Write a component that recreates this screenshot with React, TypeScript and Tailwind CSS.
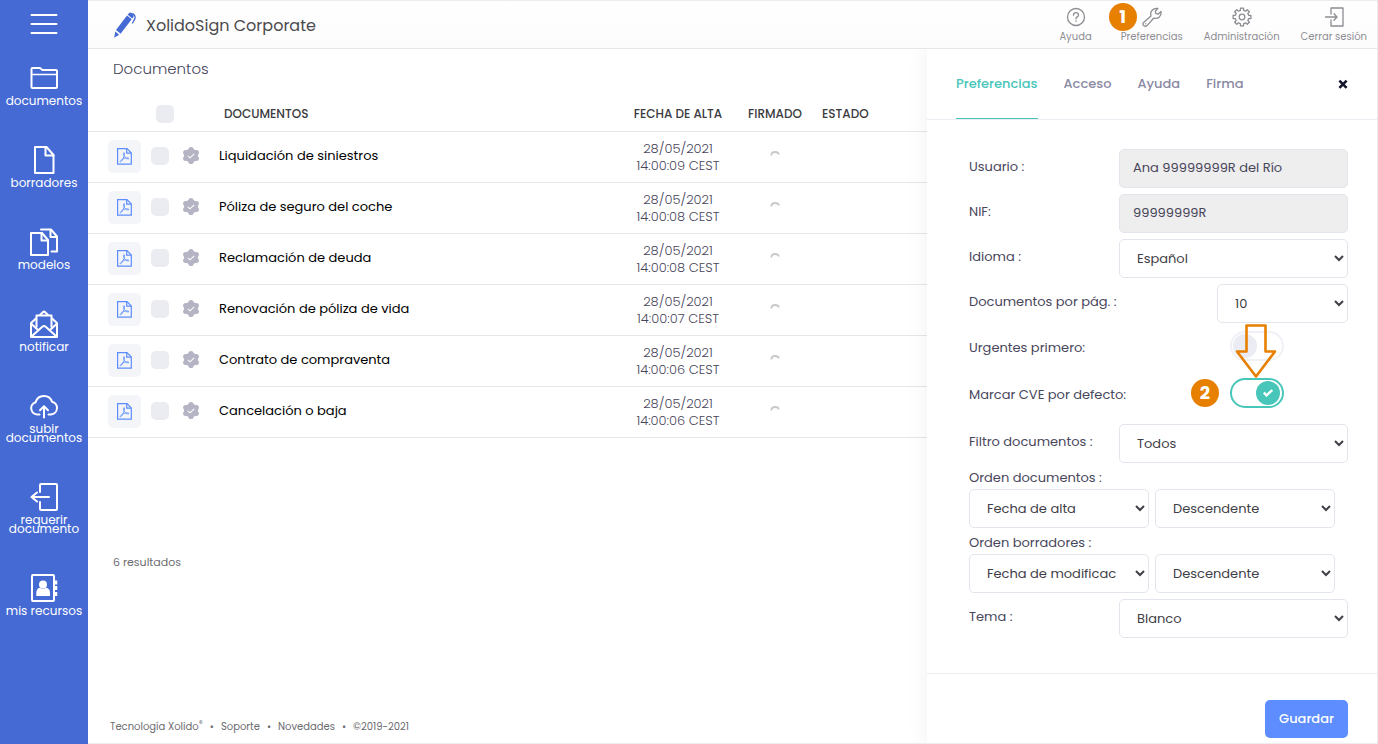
import { useState } from "react";
import type { ReactNode } from "react";

const documents = [
  { name: "Liquidación de siniestros", date: "28/05/2021", time: "14:00:09 CEST" },
  { name: "Póliza de seguro del coche", date: "28/05/2021", time: "14:00:08 CEST" },
  { name: "Reclamación de deuda", date: "28/05/2021", time: "14:00:08 CEST" },
  { name: "Renovación de póliza de vida", date: "28/05/2021", time: "14:00:07 CEST" },
  { name: "Contrato de compraventa", date: "28/05/2021", time: "14:00:06 CEST" },
  { name: "Cancelación o baja", date: "28/05/2021", time: "14:00:06 CEST" },
];

function SideIcon({ children }: { children: ReactNode }) {
  return (
    <svg
      viewBox="0 0 28 28"
      className="size-7"
      fill="none"
      stroke="currentColor"
      strokeWidth="2"
      strokeLinejoin="round"
      strokeLinecap="round"
      aria-hidden="true"
    >
      {children}
    </svg>
  );
}

const navItems = [
  {
    label: "documentos",
    icon: (
      <SideIcon>
        <path d="M1.500 23V5q0-1 1-1H10l2.500 2H26q1 0 1 1v16q0 1-1 1H2.500q-1 0-1-1" />
        <path d="M2 10.500h25" strokeWidth="1.300" />
      </SideIcon>
    ),
  },
  {
    label: "borradores",
    icon: (
      <SideIcon>
        <path d="M5 1h11.500l7 8v18H5z" />
        <path d="M15.500 1.500V9.500h8" />
      </SideIcon>
    ),
  },
  {
    label: "modelos",
    icon: (
      <SideIcon>
        <path d="M1 5h11l6 7v15H1z" />
        <path d="M11.500 5.500V12.500H18" />
        <path d="M11 1.500h10l6 7v15h-5.500M20.500 2v7H27" />
      </SideIcon>
    ),
  },
  {
    label: "notificar",
    icon: (
      <SideIcon>
        <path d="M6.500 17V5.500h15V17" />
        <path d="M10 5l2.800-2.800q1.200-1.200 2.400 0L18 5" />
        <path d="M6 8.500L1 13v14h26V13l-5-4.500" />
        <path d="M1.500 26.500l10.800-9.800q1.700-1.500 3.400 0l10.800 9.800" />
        <path d="M1.500 14L8 20M26.500 14L20 20" />
      </SideIcon>
    ),
  },
  {
    label: "subir documentos",
    icon: (
      <SideIcon>
        <path d="M9.500 22.500H7.500A6.300 6.300 0 0 1 5.600 10.200A8.600 8.600 0 0 1 22 9.700A6.500 6.500 0 0 1 21 22.500H18.500" />
        <path d="M14 25.500V14.500M10 18.200l4-4 4 4" />
      </SideIcon>
    ),
  },
  {
    label: "requerir documento",
    icon: (
      <SideIcon>
        <path d="M10 9V2q0-1 1-1h15q1 0 1 1v24q0 1-1 1H11q-1 0-1-1v-7" />
        <path d="M19 14H1.500M7 9.500L1.500 14l5.500 4.500" />
      </SideIcon>
    ),
  },
  {
    label: "mis recursos",
    icon: (
      <SideIcon>
        <rect x="2" y="1" width="22" height="26" rx="1" />
        <path d="M26 6.500v4M26 12v4M26 18v4" strokeWidth="2.500" strokeLinecap="butt" />
        <circle cx="13" cy="10.500" r="4" fill="currentColor" stroke="none" />
        <path
          d="M6.300 22v-3q0-4.500 3.600-5.200q3.100 2 6.200 0q3.900.7 3.900 5.200v3z"
          fill="currentColor"
          stroke="none"
        />
      </SideIcon>
    ),
  },
];

function PenLogo() {
  return (
    <svg viewBox="0 0 22 26" className="h-[26px] w-[22px] fill-[#456ad4]" aria-hidden="true">
      <path d="M.2 25.800L1.200 19.500L5.200 22.800z" />
      <path d="M2 18L13 3.500L17.700 7.300L6.600 21.800z" />
      <path d="M13.700 2.700L14.900 1.200Q16.300-.1 18 1.200L19 2Q20.400 3.500 19 5.500L18.200 6.500z" />
      <path
        d="M18.600 1.200Q22 3.600 20.800 6.900L18.300 11.500"
        fill="none"
        stroke="#456ad4"
        strokeWidth="1.300"
      />
    </svg>
  );
}

// Eight square teeth, four corner points per tooth.
const gearPath =
  Array.from({ length: 8 }, (_, i) => {
    const corners = [
      [-14, 6.8],
      [-9.5, 9],
      [9.5, 9],
      [14, 6.8],
    ];
    return corners
      .map(([offset, radius], j) => {
        const angle = ((i * 45 + offset) * Math.PI) / 180;
        const x = (10 + radius * Math.sin(angle)).toFixed(2);
        const y = (10 - radius * Math.cos(angle)).toFixed(2);
        return `${i === 0 && j === 0 ? "M" : "L"}${x} ${y}`;
      })
      .join("");
  }).join("") + "z";

function TopIcon({ children }: { children: ReactNode }) {
  return (
    <svg
      viewBox="0 0 20 20"
      className="size-5"
      fill="none"
      stroke="currentColor"
      strokeWidth="1.300"
      strokeLinejoin="round"
      strokeLinecap="round"
      aria-hidden="true"
    >
      {children}
    </svg>
  );
}

function PdfIcon() {
  return (
    <svg viewBox="0 0 15 17" className="h-[17px] w-[15px]" fill="none" stroke="currentColor" strokeWidth="1.200" aria-hidden="true">
      <path d="M.6.6H10L14.300 5V16.200H.6z" />
      <path d="M9.700.8V5.200H14.200" />
      <path
        d="M6.900 4.500Q5.900 5.200 6.800 7.500Q7.800 9.800 9.600 10.700Q11.600 11.300 12 10.500Q11.700 9.500 8.800 9.900Q5.600 10.500 4 12.300Q2.600 13.800 3.300 14Q4.500 13.800 5.900 11Q7.400 8 7.500 6Q7.500 4.500 6.900 4.500z"
        strokeWidth=".8"
      />
    </svg>
  );
}

function Seal() {
  return (
    <svg viewBox="0 0 16 17" className="h-[17px] w-4 fill-[#b5b4c4]" role="img" aria-label="Sellado">
      <path d="M8 .8L14.900 4.600V12.400L8 16.200L1.100 12.400V4.600z" />
      <circle cx="8" cy="2.600" r="2.600" />
      <circle cx="8" cy="14.400" r="2.600" />
      <circle cx="2.600" cy="5.400" r="2.500" />
      <circle cx="13.400" cy="5.400" r="2.500" />
      <circle cx="2.600" cy="11.600" r="2.500" />
      <circle cx="13.400" cy="11.600" r="2.500" />
      <path d="M4.800 8.800l2.200 2 4.200-4" fill="none" stroke="#fff" strokeWidth="1.100" />
    </svg>
  );
}

function Box({ label }: { label: string }) {
  return (
    <input
      type="checkbox"
      aria-label={label}
      className="block size-[18px] appearance-none rounded-[5px] bg-[#ebecf1] checked:bg-[#5d8dfe]"
    />
  );
}

function Badge({ children }: { children: ReactNode }) {
  return (
    <span className="flex size-7 items-center justify-center rounded-full bg-[#e77f00] text-lg font-bold text-white">
      {children}
    </span>
  );
}

function Toggle({ id, initial }: { id: string; initial: boolean }) {
  const [on, setOn] = useState(initial);
  return (
    <span className="relative flex">
      <input
        id={id}
        type="checkbox"
        role="switch"
        checked={on}
        onChange={(e) => setOn(e.target.checked)}
        className="peer h-[30px] w-[54px] appearance-none rounded-full border-2 border-[#f0f1f6] checked:border-[#48c6b9]"
      />
      <span className="pointer-events-none absolute top-[3px] left-[3px] flex size-6 items-center justify-center rounded-full bg-[#ebecf3] peer-checked:left-[26px] peer-checked:bg-[#48c6b9]">
        {on && (
          <svg viewBox="0 0 10 8" className="h-2 w-2.5" fill="none" stroke="#fff" strokeWidth="2.400" aria-hidden="true">
            <path d="M.8 3.600l2.800 2.800L9.200 1" />
          </svg>
        )}
      </span>
    </span>
  );
}

function Select({ id, label, options, width }: { id: string; label?: string; options: string[]; width: string }) {
  return (
    <select
      id={id}
      aria-label={label}
      className={`h-[39px] rounded-[5px] border border-[#e2e5ec] bg-white pr-4 pl-[13px] text-[13px] text-[#3f4047] ${width}`}
    >
      {options.map((o) => (
        <option key={o}>{o}</option>
      ))}
    </select>
  );
}

function Field({ id, label, children }: { id: string; label: string; children: ReactNode }) {
  return (
    <div className="flex h-[39px] items-center justify-between">
      <label htmlFor={id} className="pb-1">
        {label}
      </label>
      {children}
    </div>
  );
}

function ReadOnly({ id, value }: { id: string; value: string }) {
  return (
    <input
      id={id}
      readOnly
      value={value}
      className="h-[39px] w-[229px] rounded-[5px] border border-[#e2e5ec] bg-[#eeeeee] px-[13px] pb-0.5 text-[#48465b]"
    />
  );
}

export default function App() {
  return (
    <div className="flex min-h-screen bg-white font-['Poppins','Inter',sans-serif] text-[13px] text-[#48465b]">
      <aside className="w-[88px] shrink-0 bg-[#456ad4] text-xs text-white">
        <button type="button" aria-label="Menú" className="mx-auto block pt-2.5">
          <svg viewBox="0 0 28 28" className="size-7" stroke="currentColor" strokeWidth="2" strokeLinecap="round" aria-hidden="true">
            <path d="M1.500 5h25M1.500 14h25M1.500 23h25" />
          </svg>
        </button>
        <nav className="mt-[25px] flex flex-col gap-10">
          {navItems.map((item) => (
            <a key={item.label} href="#" className="flex flex-col items-center gap-[3px] text-center leading-[9px]">
              <span className="flex h-[30px] items-center">{item.icon}</span>
              <span className="px-1">{item.label}</span>
            </a>
          ))}
        </nav>
      </aside>

      <div className="flex min-w-0 grow flex-col border-y border-r border-[#ededf0]">
        <header className="flex h-12 shrink-0 items-center justify-between border-b border-[#e5e5ea] bg-linear-to-b from-white to-[#fcfcfc] pr-2.5 pl-[26px]">
          <div className="flex items-center gap-2.5 text-base text-[#4b4b4f]">
            <PenLogo />
            <h1 className="pt-0.5">XolidoSign Corporate</h1>
          </div>
          <nav className="flex gap-[21px] text-[10px] leading-3 text-[#8d8d93]">
            <a href="#" className="flex flex-col items-center gap-1">
              <TopIcon>
                <circle cx="10" cy="10" r="8.500" />
                <path d="M7.400 8.100Q7.600 5.600 10 5.600T12.500 7.900Q12.500 9.200 11.200 9.900T10 11.900M10 13.900v.4" />
              </TopIcon>
              Ayuda
            </a>
            <a href="#" className="relative ml-2 flex flex-col items-center gap-1">
              <TopIcon>
                <path d="M1.600 15.600L9 8.900Q8 5.300 10.400 3Q12.700.7 15.800 1.500L13.300 4.200L13.900 6.600L16.200 7.200L18.900 4.400Q19.700 7.700 17.400 9.900Q15.100 12 11.600 11.200L5 18.600Q3.300 20 1.700 18.500T1.600 15.600z" />
                <path d="M3.700 16.700v.1" />
              </TopIcon>
              Preferencias
              <span className="absolute -top-1 -left-3">
                <Badge>1</Badge>
              </span>
            </a>
            <a href="#" className="flex flex-col items-center gap-1">
              <TopIcon>
                <path d={gearPath} />
                <circle cx="10" cy="10" r="2.800" />
              </TopIcon>
              Administración
            </a>
            <a href="#" className="flex flex-col items-center gap-1">
              <TopIcon>
                <path d="M7 7V1h12v18H7v-6M1.500 10H13M10 6.800l3 3.200-3 3.200" />
              </TopIcon>
              Cerrar sesión
            </a>
          </nav>
        </header>

        <div className="flex grow">
          <main className="flex min-w-0 grow flex-col">
            <h2 className="flex h-10 items-center pl-[25px] text-[15px] font-light">Documentos</h2>
            <table className="w-full table-fixed border-collapse">
              <colgroup>
                <col className="w-[63px]" />
                <col className="w-8" />
                <col className="w-9" />
                <col />
                <col className="w-[114px]" />
                <col className="w-20" />
                <col className="w-[112px]" />
              </colgroup>
              <thead className="text-xs text-[#3a3a40]">
                <tr className="h-[42px] border-b border-[#e5e5ea] text-left">
                  <td />
                  <td className="pt-2 pl-[5px]">
                    <Box label="Seleccionar todos" />
                  </td>
                  <td />
                  <th className="pt-2 pl-[5px] font-medium">DOCUMENTOS</th>
                  <th className="pt-2 text-center font-medium">FECHA DE ALTA</th>
                  <th className="pt-2 text-center font-medium">FIRMADO</th>
                  <th className="pt-2 pl-[7px] font-medium">ESTADO</th>
                </tr>
              </thead>
              <tbody>
                {documents.map((doc) => (
                  <tr key={doc.name} className="h-[51px] border-b border-[#e5e5ea]">
                    <td className="pl-5">
                      <button
                        type="button"
                        aria-label="Ver PDF"
                        className="flex size-[33px] items-center justify-center rounded-[5px] bg-[#f3f5f9] text-[#5d8dfe]"
                      >
                        <PdfIcon />
                      </button>
                    </td>
                    <td className="pb-0.5">
                      <Box label={`Seleccionar ${doc.name}`} />
                    </td>
                    <td className="pb-0.5">
                      <Seal />
                    </td>
                    <td className="pb-0.5 text-black">{doc.name}</td>
                    <td className="text-center leading-[17px] font-light">
                      {doc.date}
                      <br />
                      {doc.time}
                    </td>
                    <td className="pb-1">
                      <svg viewBox="0 0 10 10" className="mx-auto size-2.5" fill="none" stroke="#c9c9c9" strokeWidth="1.800" role="img" aria-label="Cargando">
                        <path d="M1.200 5.500Q1.500 2 5 2T8.800 4.500" />
                      </svg>
                    </td>
                    <td />
                  </tr>
                ))}
              </tbody>
            </table>
            <p className="mt-[116px] pl-[25px] text-[11px] leading-4 text-[#6c6c70]">6 resultados</p>
            <footer className="mt-auto flex gap-[7px] pb-2 pl-[22px] text-[10px] leading-4 text-[#6c6c70]">
              <a href="#">
                Tecnología Xolido<sup className="text-[8px]">®</sup>
              </a>
              <span>•</span>
              <a href="#">Soporte</a>
              <span>•</span>
              <a href="#">Novedades</a>
              <span>•</span>
              <span>©2019-2021</span>
            </footer>
          </main>

          <section className="w-[450px] shrink-0 bg-white shadow-[0_0_20px_rgba(82,63,105,0.08)] [clip-path:inset(0_0_0_-24px)]">
            <div className="flex h-[71px] items-center justify-between border-b border-[#ebedf2] px-[29px]">
              <div role="tablist" className="flex h-full gap-[26px] font-medium text-[#8a89a3]">
                <button type="button" role="tab" aria-selected="true" className="border-b border-[#48c6b9] text-[#48c6b9]">
                  Preferencias
                </button>
                <button type="button" role="tab" aria-selected="false" className="border-b border-transparent">Acceso</button>
                <button type="button" role="tab" aria-selected="false" className="border-b border-transparent">Ayuda</button>
                <button type="button" role="tab" aria-selected="false" className="border-b border-transparent">Firma</button>
              </div>
              <button type="button" aria-label="Cerrar">
                <svg viewBox="0 0 10 10" className="size-2.5" stroke="#14142b" strokeWidth="2.600" aria-hidden="true">
                  <path d="M1.400 1.600l7.200 7.200M8.600 1.600L1.400 8.800" />
                </svg>
              </button>
            </div>

            <form onSubmit={(e) => e.preventDefault()}>
              <div className="border-b border-[#ebedf2] pt-[29px] pr-[29px] pb-[35px] pl-[42px]">
                <div className="flex flex-col gap-1.5">
                  <Field id="usuario" label="Usuario :">
                    <ReadOnly id="usuario" value="Ana 99999999R del Río" />
                  </Field>
                  <Field id="nif" label="NIF:">
                    <ReadOnly id="nif" value="99999999R" />
                  </Field>
                  <Field id="idioma" label="Idioma :">
                    <Select id="idioma" options={["Español", "English"]} width="w-[229px]" />
                  </Field>
                  <Field id="porpag" label="Documentos por pág. :">
                    <Select id="porpag" options={["10", "20", "50"]} width="w-[131px]" />
                  </Field>
                </div>
                <div className="my-2 flex items-center justify-between pr-16">
                  <label htmlFor="urgentes" className="pt-1">
                    Urgentes primero:
                  </label>
                  <div className="relative">
                    <Toggle id="urgentes" initial={false} />
                    <svg
                      viewBox="0 0 42 56"
                      className="pointer-events-none absolute -top-2 left-[5px] h-14 w-[42px]"
                      fill="none"
                      stroke="#e77f00"
                      strokeWidth="2.600"
                      strokeLinejoin="round"
                      aria-hidden="true"
                    >
                      <path d="M11.500 2.500h19v26h9.500L21 53.500L2 28.500h9.500z" />
                    </svg>
                  </div>
                </div>
                <div className="mt-[17px] mb-4 flex items-center justify-between pr-16">
                  <label htmlFor="cve" className="pt-1">
                    Marcar CVE por defecto:
                  </label>
                  <div className="flex items-center gap-[11px]">
                    <Badge>2</Badge>
                    <Toggle id="cve" initial={true} />
                  </div>
                </div>
                <Field id="filtro" label="Filtro documentos :">
                  <Select id="filtro" options={["Todos", "Firmados"]} width="w-[229px]" />
                </Field>
                <label htmlFor="orden-doc" className="mt-[5px] mb-px block leading-5">
                  Orden documentos :
                </label>
                <div className="flex gap-1.5">
                  <Select id="orden-doc" options={["Fecha de alta", "Nombre"]} width="w-[180px]" />
                  <Select id="sentido-doc" label="Sentido documentos" options={["Descendente", "Ascendente"]} width="w-[180px]" />
                </div>
                <label htmlFor="orden-bor" className="mt-[5px] mb-px block leading-5">
                  Orden borradores :
                </label>
                <div className="mb-1.5 flex gap-1.5">
                  <Select id="orden-bor" options={["Fecha de modificación", "Nombre"]} width="w-[180px]" />
                  <Select id="sentido-bor" label="Sentido borradores" options={["Descendente", "Ascendente"]} width="w-[180px]" />
                </div>
                <Field id="tema" label="Tema :">
                  <Select id="tema" options={["Blanco", "Oscuro"]} width="w-[229px]" />
                </Field>
              </div>
              <div className="flex justify-end pt-[26px] pr-[29px]">
                <button type="submit" className="h-[38px] rounded-[5px] bg-[#5d8dfe] px-3.5 font-medium text-white">
                  Guardar
                </button>
              </div>
            </form>
          </section>
        </div>
      </div>
    </div>
  );
}
